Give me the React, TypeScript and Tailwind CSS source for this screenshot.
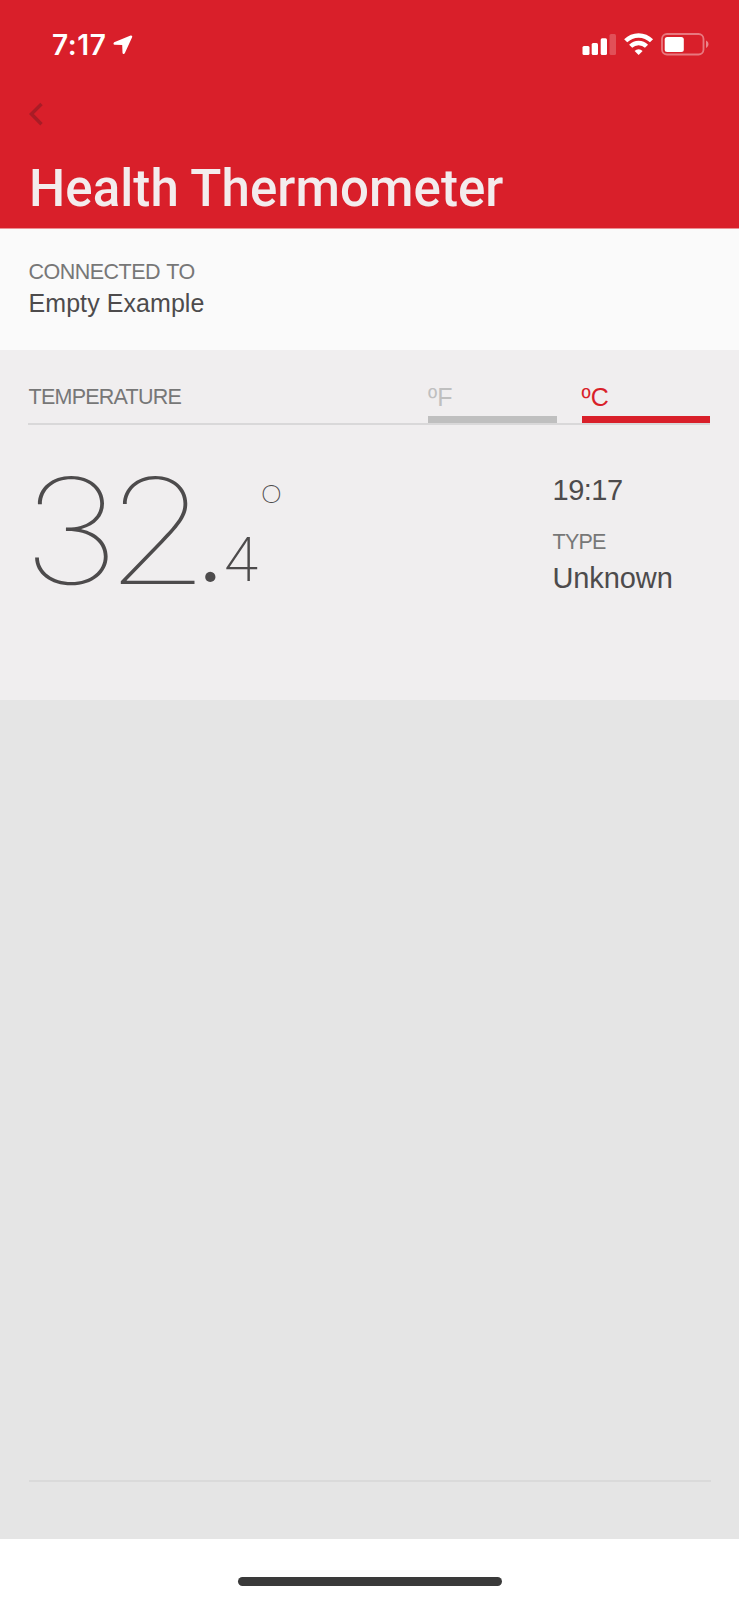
import React from "react";

function StatusBar() {
  return (
    <div className="flex h-[88px] items-center justify-between pl-[52px] pr-[29px] text-white">
      <div className="flex items-center gap-[6px] pt-px">
        <span className="font-['Inter',sans-serif] text-[28px] font-semibold leading-[34px] tracking-[0.6px]">7:17</span>
        <svg width="20" height="20" viewBox="0 0 20 20" fill="currentColor">
          <path d="M17.6.6 1.2 7.2C.1 7.8.3 9.6 1.6 9.7L9.2 10 9.5 17.8C9.6 19.3 11.2 19.4 11.8 18.3L19.1 2.3C19.6 1.1 18.8.2 17.6.6Z" />
        </svg>
      </div>
      <svg width="128" height="24" viewBox="0 0 128 24" fill="#fff">
        <rect x="0.5" y="14" width="7" height="9" rx="1.5" />
        <rect x="9.7" y="11" width="6.3" height="12" rx="1.5" />
        <rect x="18.7" y="6.2" width="6.3" height="16.8" rx="1.5" />
        <rect x="27.5" y="2" width="6.5" height="21" rx="1.5" opacity="0.22" />
        <g fill="none" stroke="#fff" strokeWidth="4.4">
          <path d="M43.7 8.8a18.2 18.2 0 0 1 25.8 0" />
          <path d="M48.7 14.2a11.2 11.2 0 0 1 15.8 0" />
        </g>
        <path d="M56.6 23 52.6 18.9a5.7 5.7 0 0 1 8 0Z" />
        <rect x="80" y="2" width="41.5" height="20.5" rx="5" fill="none" stroke="#fff" strokeOpacity="0.4" strokeWidth="1.8" />
        <rect x="82.7" y="4.9" width="19.1" height="15" rx="2.5" />
        <path d="M124 8.6c3.3 1.3 3.3 6 0 7.3Z" opacity="0.45" />
      </svg>
    </div>
  );
}

function Header() {
  return (
    <header className="flex h-[229px] flex-col border-b border-[#ec8f94] bg-[#d91f2a]">
      <StatusBar />
      <button className="ml-[28px] mt-[14px] h-6 w-6 text-[#a91c26]" aria-label="Back">
        <svg width="16" height="24" viewBox="0 0 16 24" fill="none" stroke="currentColor" strokeWidth="3.4">
          <path d="M13.5 2 3.4 12 13.5 22.3" />
        </svg>
      </button>
      <h1 className="ml-[29px] mt-[33px] whitespace-nowrap font-['Roboto',sans-serif] text-[51px] font-medium leading-[60px] tracking-[0.08px] text-[#f3eced]">
        Health Thermometer
      </h1>
    </header>
  );
}

export default function App() {
  return (
    <div className="flex h-[1600px] w-[739px] flex-col overflow-hidden bg-white font-['Liberation_Sans',sans-serif] text-[#4d4b4c]">
      <Header />
      <section className="h-[121px] bg-[#fafafa] px-[28.5px] pt-[30px]">
        <h2 className="text-[21.5px] leading-[26px] tracking-[-0.52px] text-[#777] [word-spacing:1.2px]">CONNECTED TO</h2>
        <p className="mt-[3px] text-[25px] leading-[30px] tracking-[0.07px]">Empty Example</p>
      </section>
      <section className="h-[350px] bg-[#f0eeef] pl-[28px] pr-[29px] pt-[31px]">
        <div className="flex h-[44px] items-end justify-between border-b-2 border-[#d9d8d9]">
          <h2 className="mb-[13px] ml-[0.5px] text-[21.5px] leading-[26px] tracking-[-0.75px] text-[#777]">TEMPERATURE</h2>
          <div className="flex gap-[25px] text-[25px] leading-[30px]">
            <button className="h-[42px] w-[128.5px] border-b-[7px] border-[#bfbfbf] pb-[4px] text-left text-[#bfbfbf]">ºF</button>
            <button className="h-[42px] w-[128.5px] border-b-[7px] border-[#d91f2a] pb-[4px] text-left text-[#d91f2a]">ºC</button>
          </div>
        </div>
        <div className="flex justify-between pt-[46px]">
          <div className="flex h-[150px]">
            <span className="-ml-[6px] w-[170px] origin-left scale-x-[1.15] font-['Inter',sans-serif] text-[146px] font-thin leading-[120px] tracking-[-12.5px]">32</span>
            <span className="-mt-[11px] w-[32px] font-['Lato',sans-serif] text-[158px] font-thin leading-[120px]">.</span>
            <span className="pt-[53px] font-['Roboto',sans-serif] text-[62px] font-extralight leading-[72px]">4</span>
            <span className="ml-[2.5px] origin-left scale-x-[1.14] pt-[2px] font-['Roboto',sans-serif] text-[33px] font-thin leading-[38px]">o</span>
          </div>
          <div className="w-[157.5px]">
            <p className="pt-px text-[29px] leading-[36px] tracking-[-0.5px]">19:17</p>
            <h2 className="mt-[21px] text-[21.5px] leading-[26px] tracking-[-0.75px] text-[#777]">TYPE</h2>
            <p className="mt-[5px] text-[29px] leading-[36px] tracking-[-0.1px]">Unknown</p>
          </div>
        </div>
      </section>
      <main className="flex h-[839px] flex-col justify-end bg-[#e5e5e5] px-[28.5px]">
        <div className="mb-[57px] h-[2px] bg-[#dadada]" />
      </main>
      <footer className="flex h-[61px] justify-center pt-[38px]">
        <div className="h-[9px] w-[264px] rounded-full bg-[#3a3a3a]" />
      </footer>
    </div>
  );
}
